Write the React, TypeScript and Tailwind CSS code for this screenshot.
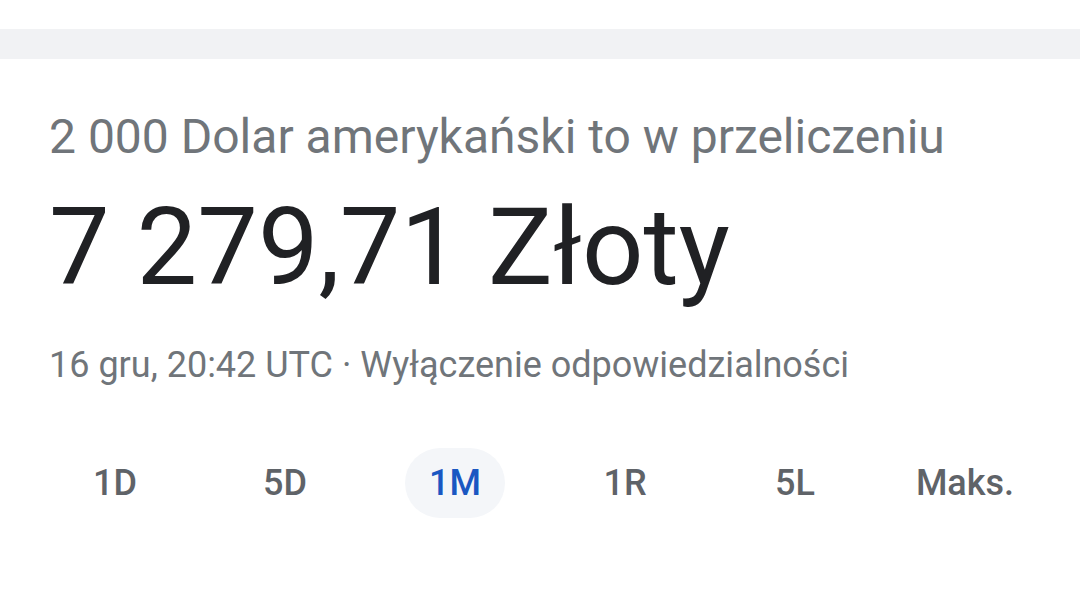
import React from "react";

const tabs = ["1D", "5D", "1M", "1R", "5L", "Maks."];

export default function App() {
  return (
    <div
      className="w-[1080px] h-[607px] bg-white overflow-hidden"
      style={{ fontFamily: "Roboto, 'Noto Sans', sans-serif" }}
    >
      <div className="h-[29px]" />
      <div className="h-[30px] bg-[#f1f2f4]" />
      <div className="pl-[49px] pt-[46px]">
        <div className="text-[48px] leading-[64px] text-[#70757a] whitespace-nowrap">
          2 000 Dolar amerykański to w przeliczeniu
        </div>
        <div className="text-[108px] leading-[140px] text-[#202124] mt-[8px] whitespace-nowrap">
          7 279,71 Złoty
        </div>
        <div className="text-[36px] leading-[46px] text-[#70757a] mt-[25px] whitespace-nowrap">
          16 gru, 20:42 UTC · Wyłączenie odpowiedzialności
        </div>
      </div>
      <div className="grid grid-cols-6 px-[30px] mt-[60px]">
        {tabs.map((t) => (
          <div key={t} className="flex justify-center">
            <div
              className={
                t === "1M"
                  ? "h-[70px] w-[100px] rounded-full bg-[#f4f6f9] flex items-center justify-center text-[36px] font-medium text-[#1a57c2]"
                  : "h-[70px] w-[100px] flex items-center justify-center text-[36px] font-medium text-[#5f6368] whitespace-nowrap"
              }
            >
              {t}
            </div>
          </div>
        ))}
      </div>
    </div>
  );
}
